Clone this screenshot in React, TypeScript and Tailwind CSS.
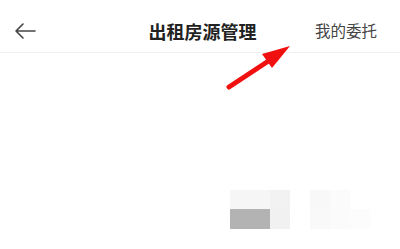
import React from 'react';

const App: React.FC = () => {
  return (
    <div
      className="relative w-[400px] h-[249px] bg-white overflow-hidden"
      style={{ fontFamily: '"Noto Sans CJK SC", "Noto Sans", sans-serif' }}
    >
      <div className="h-[53px] flex items-center border-b border-[#f0f0f0] px-[14px] pt-[9px]">
        <button className="w-[22px] h-[22px] flex items-center justify-center text-[#333]">
          <svg width="22" height="18" viewBox="0 0 22 18" fill="none">
            <path d="M21 9H2M9 2L2 9l7 7" stroke="#444" strokeWidth="1.6" strokeLinecap="round" strokeLinejoin="round" />
          </svg>
        </button>
        <h1 className="flex-1 text-center text-[18px] font-bold text-[#222] pl-[62px] leading-none">
          出租房源管理
        </h1>
        <span className="w-[70px] text-[15.5px] text-[#444] leading-none mr-[9px] text-right">我的委托</span>
      </div>

      {/* annotation arrow */}
      <svg className="absolute left-[222px] top-[42px]" width="72" height="50" viewBox="0 0 72 50">
        <path d="M7 45L48 18" stroke="#f01010" strokeWidth="5" strokeLinecap="round" />
        <path d="M68 4L40 12L50 26Z" fill="#f01010" />
      </svg>

      {/* blurred mosaic */}
      <div className="absolute left-[230px] top-[190px] grid grid-cols-[20px_20px_20px_20px_20px_20px_20px] grid-rows-[19px_20px]">
        <div className="bg-[#f6f6f6]" />
        <div className="bg-[#f6f6f6]" />
        <div className="bg-[#f2f2f2]" />
        <div className="bg-white" />
        <div className="bg-[#f8f8f8]" />
        <div className="bg-[#fbfbfb]" />
        <div className="bg-white" />
        <div className="bg-[#b3b3b3]" />
        <div className="bg-[#b3b3b3]" />
        <div className="bg-[#f1f1f1]" />
        <div className="bg-white" />
        <div className="bg-[#f9f9f9]" />
        <div className="bg-[#fbfbfb]" />
        <div className="bg-[#fcfcfc]" />
      </div>
    </div>
  );
};

export default App;
